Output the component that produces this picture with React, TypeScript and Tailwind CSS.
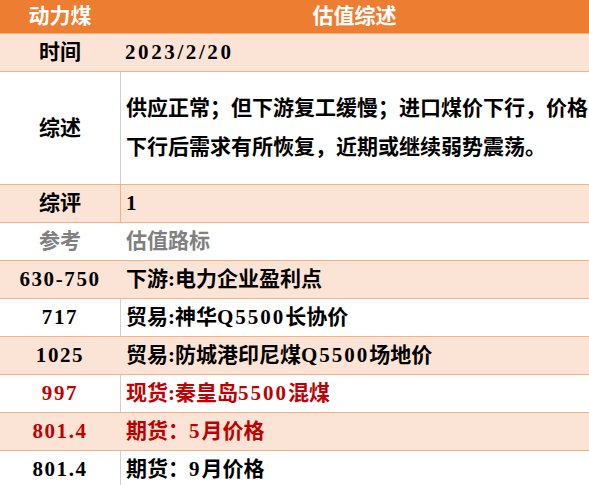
import React from "react";

type Row = {
  left: string;
  right: string;
  bg: "peach" | "white";
  color?: "black" | "gray" | "red";
  divider?: "gray" | "orange" | "none";
};

const rows: Row[] = [
  { left: "630-750", right: "下游:电力企业盈利点", bg: "peach", divider: "none" },
  { left: "717", right: "贸易:神华Q5500长协价", bg: "white", divider: "gray" },
  { left: "1025", right: "贸易:防城港印尼煤Q5500场地价", bg: "peach", divider: "none" },
  { left: "997", right: "现货:秦皇岛5500混煤", bg: "white", color: "red", divider: "gray" },
  { left: "801.4", right: "期货：5月价格", bg: "peach", color: "red", divider: "none" },
  { left: "801.4", right: "期货：9月价格", bg: "white", divider: "gray" },
];

function Mixed({ text }: { text: string }) {
  const parts = text.split(/([A-Za-z0-9.\-]+)/).filter((p) => p.length > 0);
  return (
    <>
      {parts.map((p, i) =>
        /^[A-Za-z0-9.\-]+$/.test(p) ? (
          <span key={i} className="tracking-[2px]">
            {p}
          </span>
        ) : (
          <span key={i}>{p}</span>
        )
      )}
    </>
  );
}

function DataRow({ r }: { r: Row }) {
  const bg = r.bg === "peach" ? "bg-[#FBE4D5]" : "bg-white";
  const color =
    r.color === "red" ? "text-[#C00000]" : r.color === "gray" ? "text-[#808080]" : "text-black";
  const div =
    r.divider === "gray"
      ? "border-l border-[#D0D0D0]"
      : r.divider === "orange"
      ? "border-l border-[#F4B183]"
      : "border-l border-transparent";
  return (
    <div className={`flex h-[38px] border-b border-[#F4B183] ${bg} ${color}`}>
      <div className="w-[120px] shrink-0 flex items-center justify-center tracking-[1.6px]">{r.left}</div>
      <div className={`flex-1 flex items-center pl-[5px] whitespace-nowrap ${div}`}>
        <Mixed text={r.right} />
      </div>
    </div>
  );
}

export default function App() {
  return (
    <div
      className="w-[589px] h-[485px] overflow-hidden bg-white font-bold text-[21px] leading-none"
      style={{ fontFamily: '"Liberation Serif", "Noto Sans CJK SC", serif' }}
    >
      {/* header */}
      <div className="flex h-[34px] bg-[#ED7D31] text-white border-b border-[#F4B183]">
        <div className="w-[120px] shrink-0 flex items-center justify-center">动力煤</div>
        <div className="flex-1 flex items-center justify-center">估值综述</div>
      </div>
      {/* 时间 */}
      <div className="flex h-[38px] bg-[#FBE4D5] border-b border-[#F4B183] text-black">
        <div className="w-[120px] shrink-0 flex items-center justify-center">时间</div>
        <div className="flex-1 flex items-center pl-[5px] tracking-[2.6px]">2023/2/20</div>
      </div>
      {/* 综述 */}
      <div className="flex h-[113px] bg-white border-b border-[#F4B183] text-black">
        <div className="w-[120px] shrink-0 flex items-center justify-center">综述</div>
        <div className="flex-1 flex flex-col justify-center pl-[5px] border-l border-[#D0D0D0] leading-[39px] whitespace-nowrap">
          <div>供应正常；但下游复工缓慢；进口煤价下行，价格</div>
          <div>下行后需求有所恢复，近期或继续弱势震荡。</div>
        </div>
      </div>
      {/* 综评 */}
      <div className="flex h-[38px] bg-[#FBE4D5] border-b border-[#F4B183] text-black">
        <div className="w-[120px] shrink-0 flex items-center justify-center">综评</div>
        <div className="flex-1 flex items-center pl-[5px] border-l border-[#F4B183]">1</div>
      </div>
      {/* 参考 */}
      <div className="flex h-[38px] bg-white border-b border-[#F4B183] text-[#808080]">
        <div className="w-[120px] shrink-0 flex items-center justify-center">参考</div>
        <div className="flex-1 flex items-center pl-[6px]">估值路标</div>
      </div>
      {rows.map((r, i) => (
        <DataRow key={i} r={r} />
      ))}
    </div>
  );
}
